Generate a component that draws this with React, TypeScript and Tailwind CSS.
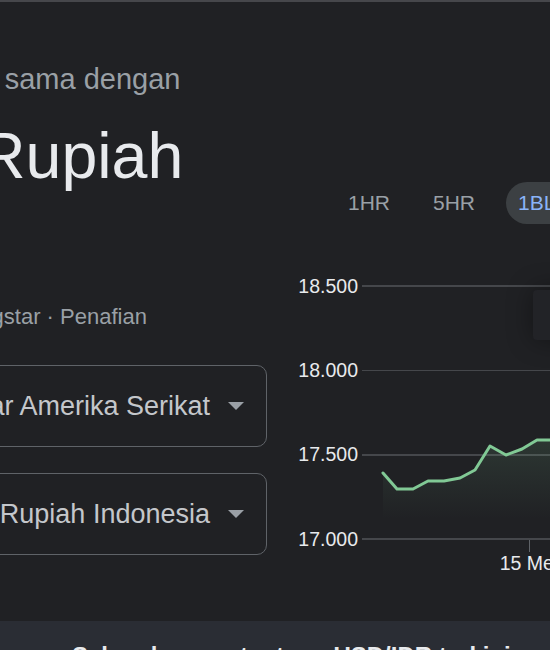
import React from "react"

const font = { fontFamily: '"Liberation Sans", Arial, sans-serif' }

const ranges = ["1HR", "5HR", "1BLN", "1THN", "5THN", "Maks"]
const ticks = ["18.500", "18.000", "17.500", "17.000"]

// rate points over the month, in chart-box coordinates
const points: [number, number][] = [
  [85, 229], [99, 245], [115, 245], [130, 237], [146, 237], [162, 234],
  [177, 226], [192, 202], [208, 211], [224, 205], [239, 196], [254, 196],
  [270, 199], [286, 193], [302, 198], [318, 190],
]

function Caret() {
  return (
    <svg width="16" height="8" viewBox="0 0 16 8" className="shrink-0">
      <polygon points="0,0 16,0 8,8" fill="#9aa0a6" />
    </svg>
  )
}

function CurrencyRow({ amount, label }: { amount: string; label: string }) {
  return (
    <div className="flex gap-[16px] h-[82px]">
      <div className="w-[140px] shrink-0 border border-[#5f6368] rounded-[10px] flex items-center px-[20px] text-[27px] text-[#e8eaed]">
        {amount}
      </div>
      <div className="flex-1 border border-[#5f6368] rounded-[10px] flex items-center justify-end gap-[18px] pr-[22px]">
        <span className="text-[27px] text-[#c4c7cb] whitespace-nowrap">{label}</span>
        <Caret />
      </div>
    </div>
  )
}

function RateChart() {
  const line = points.map(([x, y], i) => `${i ? "L" : "M"}${x} ${y}`).join(" ")
  const area = `${line} L${points[points.length - 1][0]} 290 L${points[0][0]} 290 Z`
  return (
    <div className="relative w-[400px] h-[340px]">
      {ticks.map((t) => (
        <div key={t} className="flex items-center h-[84.33px]">
          <span className="w-[60px] text-right text-[19.5px] text-[#e8eaed]">{t}</span>
          <div className="flex-1 ml-[4px] h-[1.5px] bg-[#45474b]" />
        </div>
      ))}

      <svg className="absolute left-0 top-0 pointer-events-none" width="400" height="340" viewBox="0 0 400 340">
        <defs>
          <linearGradient id="fade" x1="0" y1="190" x2="0" y2="275" gradientUnits="userSpaceOnUse">
            <stop offset="0" stopColor="#81c995" stopOpacity="0.14" />
            <stop offset="1" stopColor="#81c995" stopOpacity="0" />
          </linearGradient>
        </defs>
        <path d={area} fill="url(#fade)" />
        <path d={line} fill="none" stroke="#81c995" strokeWidth="3" strokeLinejoin="round" strokeLinecap="round" />
      </svg>

      {/* hover card, mostly off to the right */}
      <div className="absolute left-[235px] top-[46px] w-[140px] h-[50px] bg-[#222327] rounded-[4px] shadow-[0_0_26px_rgba(0,0,0,0.4)]" />

      {/* x axis tick */}
      <div className="absolute left-[231px] top-[296px] w-px h-[12px] bg-[#5f6368]" />
      <span className="absolute left-[231px] top-[305px] -translate-x-1/2 text-[19.5px] text-[#e8eaed] whitespace-nowrap">
        15 Mei
      </span>
    </div>
  )
}

export default function App() {
  return (
    <div className="w-[550px] h-[650px] overflow-hidden bg-[#202124] flex flex-col" style={font}>
      <div className="h-[2px] shrink-0 bg-[#46474b]" />

      <div className="flex-1 flex">
        {/* converter summary + inputs */}
        <div className="-ml-[308px] w-[575px] shrink-0 pt-[61px]">
          <div className="text-[29px] leading-[32px] text-[#9aa0a6] whitespace-nowrap">
            1 Dolar Amerika Serikat sama dengan
          </div>
          <div className="mt-[23px] text-[64.5px] leading-[76px] text-[#e8eaed] w-[560px]">
            17392,50 Rupiah Indonesia
          </div>
          <div className="mt-[33px] text-[22px] leading-[28px] text-[#9aa0a6] whitespace-nowrap">
            4 Jun 09.43 UTC · Dari Morningstar · Penafian
          </div>
          <div className="mt-[34px] flex flex-col gap-[26px]">
            <CurrencyRow amount="1" label="Dolar Amerika Serikat" />
            <CurrencyRow amount="17392,50" label="Rupiah Indonesia" />
          </div>
        </div>

        {/* history chart */}
        <div className="ml-[31px] shrink-0">
          <div className="ml-[38px] mt-[180px] flex gap-[19px]">
            {ranges.map((r) => (
              <button
                key={r}
                className={
                  r === "1BLN"
                    ? "h-[42px] px-[12px] rounded-full bg-[#3c4043] text-[21px] text-[#8ab4f8]"
                    : "h-[42px] px-[12px] rounded-full text-[21px] text-[#9aa0a6]"
                }
              >
                {r}
              </button>
            ))}
          </div>
          <div className="mt-[20px]">
            <RateChart />
          </div>
        </div>
      </div>

      <div className="h-[29px] shrink-0 bg-[#2a2d34] pl-[72px] pt-[21px]">
        <span className="text-[24px] leading-[28px] font-bold text-[#e8eaed] whitespace-nowrap">
          Selengkapnya tentang USD/IDR terkini
        </span>
      </div>
    </div>
  )
}
